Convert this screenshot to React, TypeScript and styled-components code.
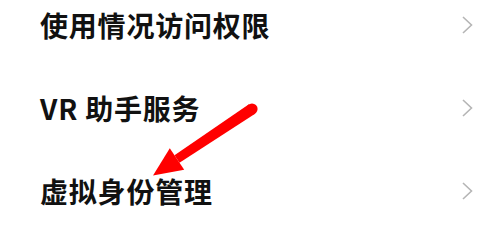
import styled, { createGlobalStyle } from 'styled-components'

const GlobalStyle = createGlobalStyle`
  html, body {
    margin: 0;
    padding: 0;
    background: #ffffff;
  }
  body {
    font-family: "Noto Sans CJK SC", "Noto Sans", sans-serif;
  }
`

const Screen = styled.div`
  position: relative;
  width: 500px;
  height: 230px;
  overflow: hidden;
  background: #ffffff;
`

const List = styled.ul`
  list-style: none;
  margin: -17px 0 0;
  padding: 0;
`

const Row = styled.li`
  display: flex;
  align-items: center;
  justify-content: space-between;
  height: 83px;
  padding: 0 27px 0 40px;
`

const Label = styled.span`
  font-size: 28px;
  font-weight: 700;
  line-height: 1;
  letter-spacing: 0.8px;
  color: #111111;
`

const Chevron = styled.svg`
  width: 11px;
  height: 18px;
  flex-shrink: 0;
`

const Overlay = styled.svg`
  position: absolute;
  top: 0;
  left: 0;
  width: 500px;
  height: 230px;
  pointer-events: none;
`

const items = ['使用情况访问权限', 'VR 助手服务', '虚拟身份管理']

const App = () => {
  return (
    <Screen>
      <GlobalStyle />
      <List>
        {items.map((item) => (
          <Row key={item}>
            <Label>{item}</Label>
            <Chevron viewBox="0 0 11 18">
              <path
                d="M1 1 L9.5 9 L1 17"
                fill="none"
                stroke="#b5b5b5"
                strokeWidth="1.6"
                strokeLinejoin="miter"
              />
            </Chevron>
          </Row>
        ))}
      </List>
      <Overlay viewBox="0 0 500 230">
        <circle cx="252" cy="109" r="5.6" fill="#ff0000" />
        <polygon
          points="255.1,113.7 248.9,104.3 174.5,155.3 179.5,162.7"
          fill="#ff0000"
        />
        <polygon points="153,175.5 169.8,148.2 184.2,169.8" fill="#ff0000" />
      </Overlay>
    </Screen>
  )
}

export default App
